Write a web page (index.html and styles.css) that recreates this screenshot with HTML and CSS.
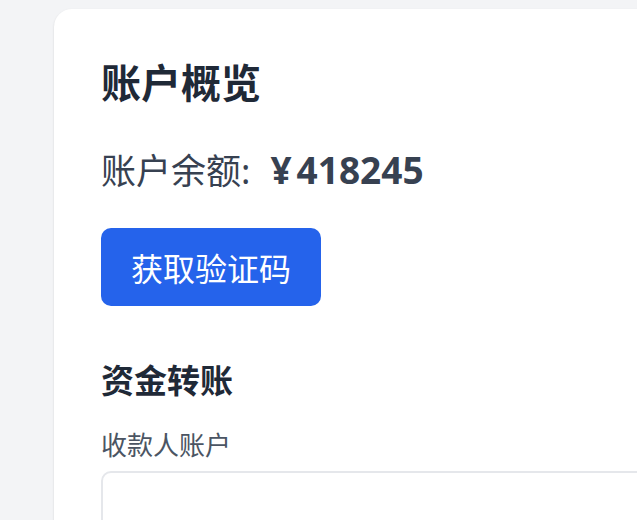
FILE: index.html
```html
<!DOCTYPE html>
<html lang="zh-CN">
  <head>
    <meta charset="UTF-8" />
    <meta name="viewport" content="width=device-width, initial-scale=1.0" />
    <title>账户概览</title>
    <link rel="stylesheet" href="styles.css">
  </head>
  <body>
    <div class="card">
      <h1>账户概览</h1>
      <p class="balance">账户余额:<strong><span class="cur">¥</span>418245</strong></p>
      <button class="btn">获取验证码</button>

      <h2>资金转账</h2>
      <label for="payee">收款人账户</label>
      <input type="text" id="payee" />
    </div>
  </body>
</html>
```

FILE: styles.css
```css
html,
body {
  overflow: hidden;
}
body {
  margin: 0;
  padding: 9px 0 0 54px;
  background: #f3f4f6;
  font-family: "Noto Sans", "Noto Sans CJK SC", sans-serif;
  color: #1f2937;
}
.card {
  width: 640px;
  min-height: 560px;
  box-sizing: border-box;
  background: #fff;
  border-radius: 18px;
  padding: 50px 47px;
  box-shadow: 0 1px 3px rgba(0, 0, 0, 0.08), 0 1px 2px rgba(0, 0, 0, 0.05);
}
h1 {
  margin: 0 0 39px;
  font-size: 40px;
  line-height: 48px;
  font-weight: 700;
  color: #1f2937;
}
.balance {
  margin: 0 0 33px;
  font-size: 35px;
  line-height: 48px;
  color: #374151;
}
.balance strong {
  margin-left: 20px;
  font-size: 37px;
  font-weight: 700;
  color: #374151;
}
.balance .cur {
  margin-right: 5px;
}
.btn {
  display: block;
  height: 78px;
  padding: 0 30px;
  border: none;
  border-radius: 10px;
  background: #2563eb;
  color: #fff;
  font-family: inherit;
  font-size: 32px;
  cursor: pointer;
}
h2 {
  margin: 53px 0 24px;
  font-size: 33px;
  line-height: 44px;
  font-weight: 700;
  color: #1f2937;
}
label {
  display: block;
  margin-bottom: 8px;
  font-size: 26px;
  line-height: 36px;
  color: #4b5563;
}
input[type="text"] {
  display: block;
  width: 100%;
  height: 80px;
  box-sizing: border-box;
  border: 2px solid #e5e7eb;
  border-radius: 10px;
  font-size: 28px;
}
```
